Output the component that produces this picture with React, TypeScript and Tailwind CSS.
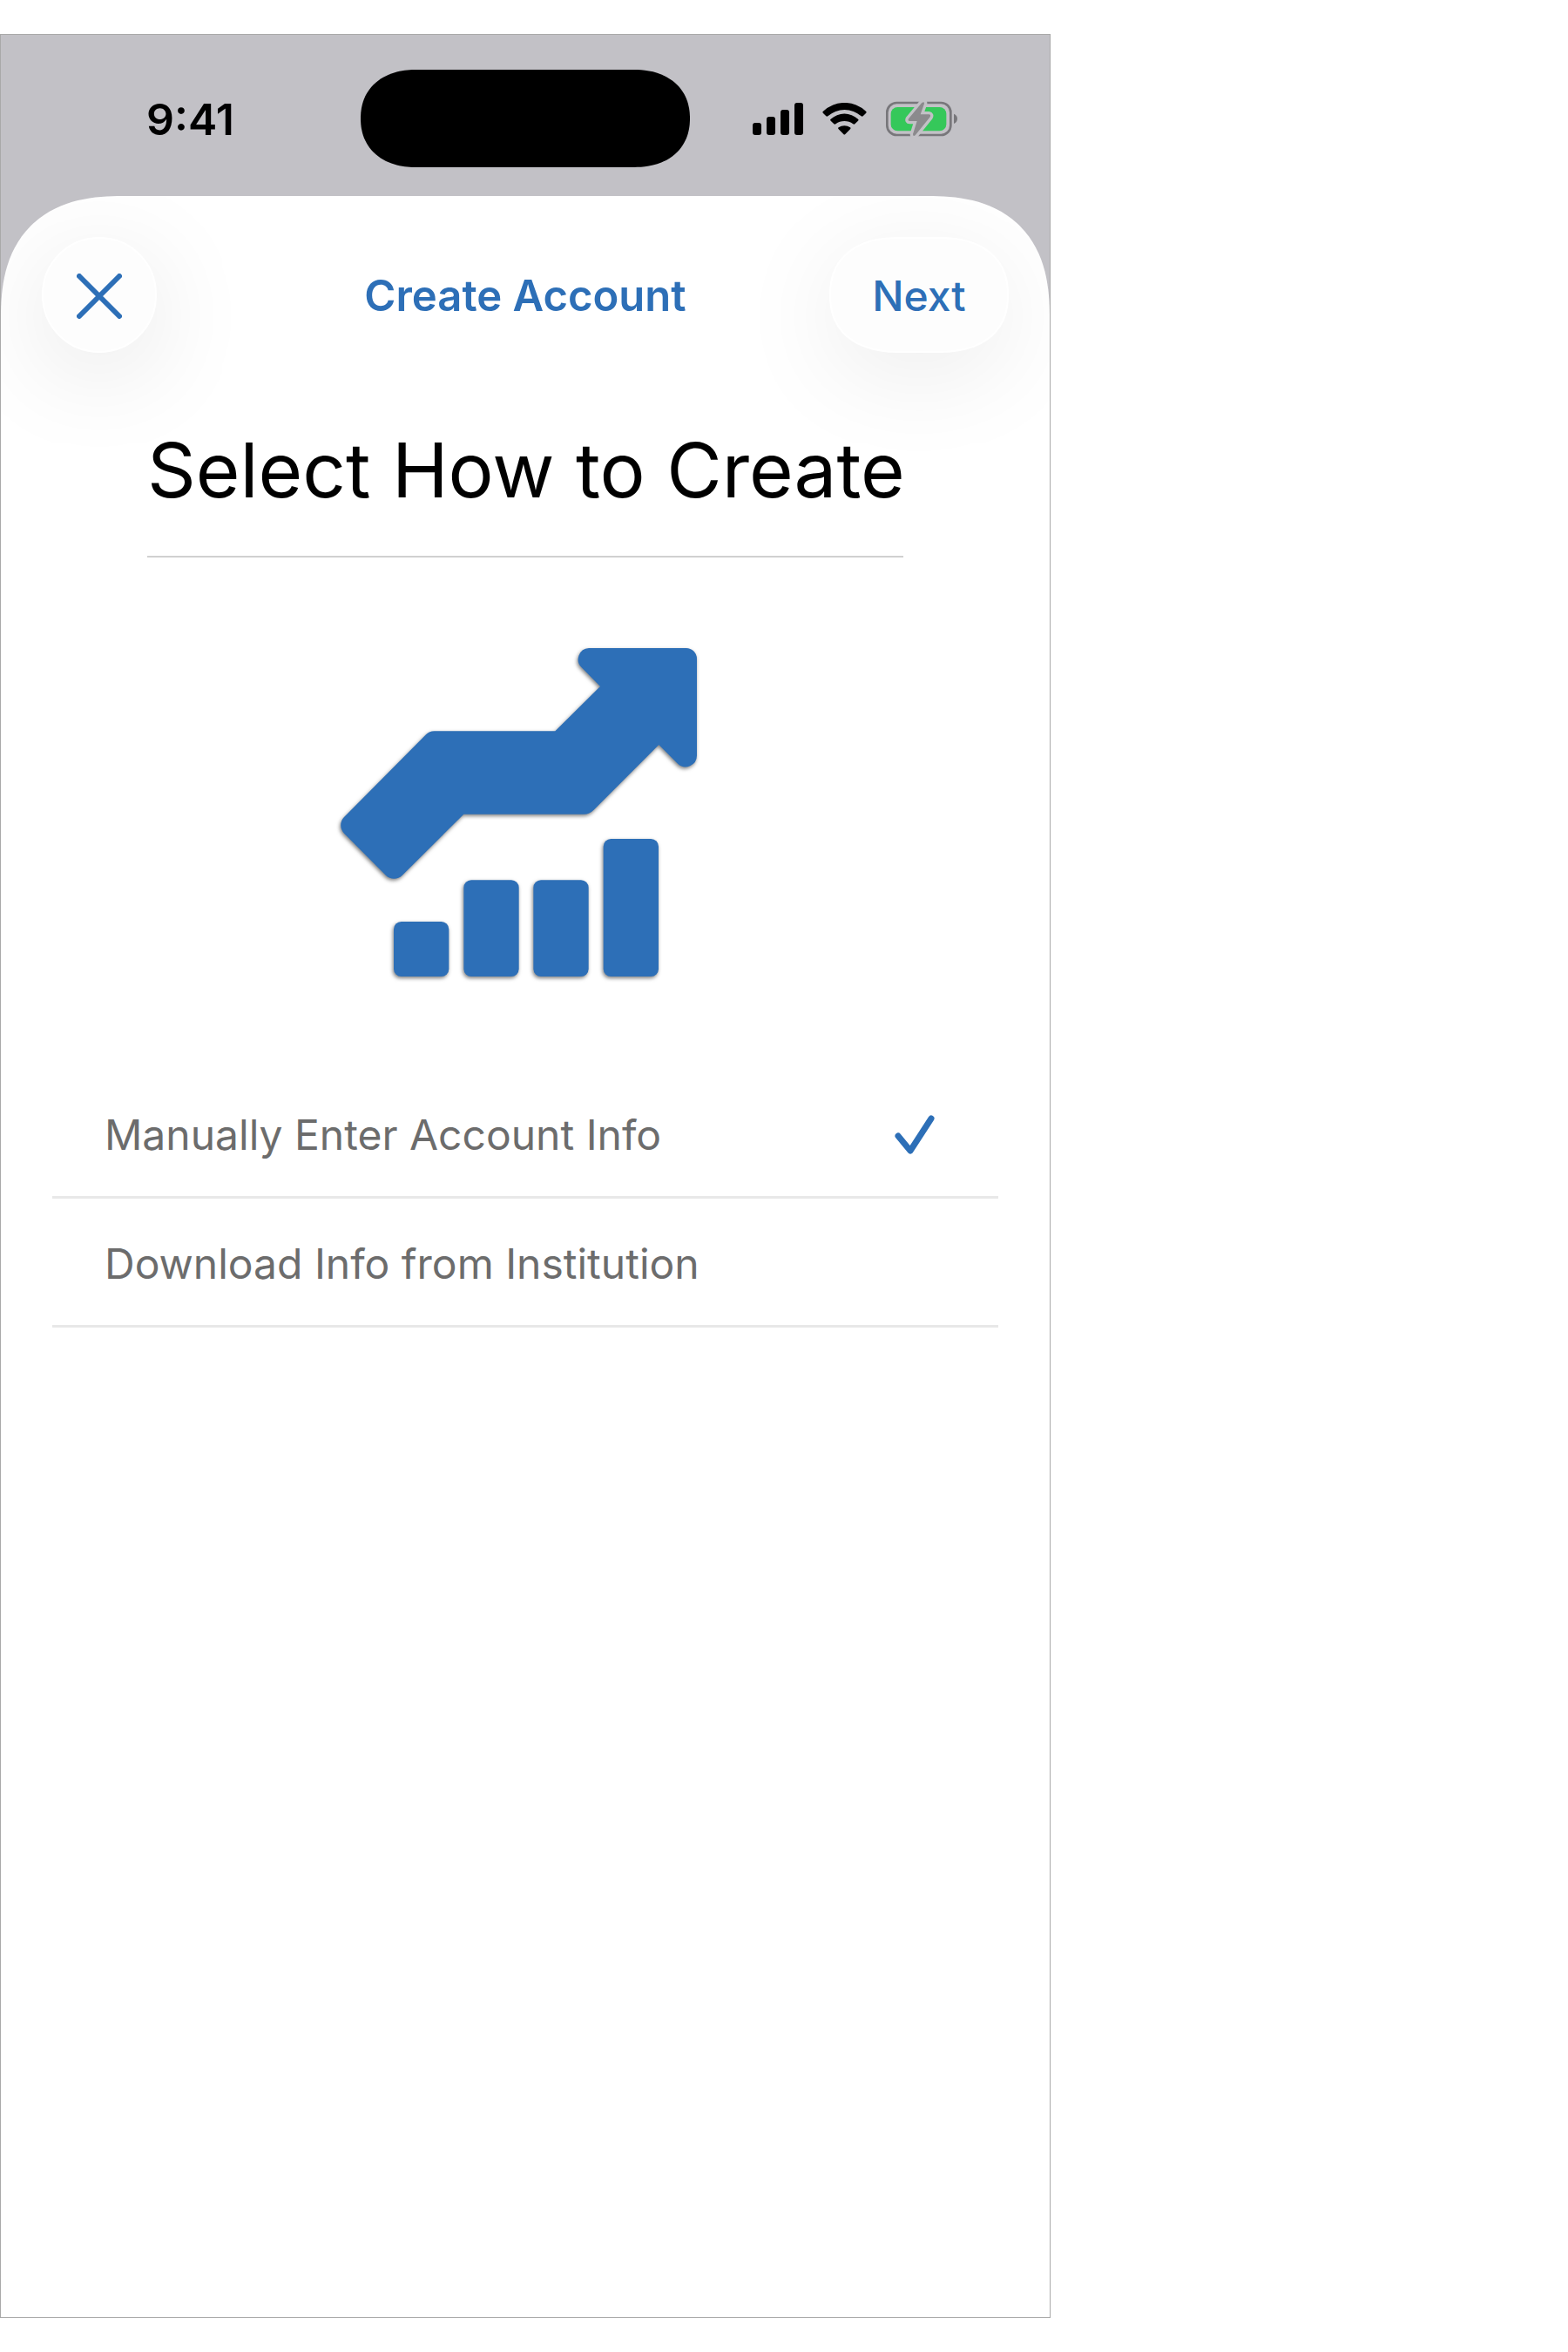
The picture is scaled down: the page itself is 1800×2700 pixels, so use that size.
import { useState } from "react";

const options = [
    { id: "manual", label: "Manually Enter Account Info" },
    { id: "download", label: "Download Info from Institution" },
];

function SignalIcon() {
    return (
        <svg viewBox="75 54 174 111" className="h-[37px] w-[58px]" aria-hidden="true">
            <rect x="75" y="123" width="30" height="42" rx="9" />
            <rect x="123" y="102" width="30" height="63" rx="9" />
            <rect x="171" y="78" width="30" height="87" rx="9" />
            <rect x="219" y="54" width="30" height="111" rx="9" />
        </svg>
    );
}

function WifiIcon() {
    return (
        <svg viewBox="315 54 153 111" className="h-[37px] w-[51px]" aria-hidden="true">
            <path d="M318 83A107 107 0 0 1 465 83Q469 86 465 90L455 100Q452 102 449 100A86 86 0 0 0 334 100Q331 102 328 100L318 90Q314 86 318 83Z" />
            <path d="M344 110A70 70 0 0 1 438 110Q442 113 438 116L427 127Q424 129 421 127A51 51 0 0 0 361 127Q358 129 355 127L344 116Q340 113 344 110Z" />
            <path d="M371 139A34 34 0 0 1 411 139Q415 141 411 145L394 162Q391 165 388 162L371 145Q367 141 371 139Z" />
        </svg>
    );
}

function BatteryIcon() {
    const bolt =
        "M657 55L612 109Q608 117 616 117H641L627 162Q627 171 635 166L686 103Q690 95 682 94H653L666 57Q667 47 657 55Z";
    return (
        <svg viewBox="534 45 246 129" className="h-[43px] w-[82px]" aria-hidden="true">
            <rect x="538" y="54" width="219" height="111" rx="33" fill="none" stroke="#78777b" strokeWidth="8" />
            <rect x="551" y="69" width="191" height="82" rx="23" fill="#35c85a" />
            <path d="M768 92Q780 97 780 109Q780 121 768 126Z" fill="#78777b" />
            <path d={bolt} fill="#c2c1c6" stroke="#c2c1c6" strokeWidth="20" strokeLinejoin="round" />
            <path d={bolt} fill="#8b8a8d" />
        </svg>
    );
}

function GrowthIcon() {
    return (
        <svg
            viewBox="24 0 1350 1260"
            className="h-[420px] w-[450px] drop-shadow-[-1px_2px_2px_rgba(0,0,0,0.5)]"
            fill="#2d6fb7"
            aria-hidden="true"
        >
            <path d="M918 72H1253A37 37 0 0 1 1290 109V442A39 39 0 0 1 1224 470L1159 405L935 629Q920 644 902 644H487L275 855A40 40 0 0 1 219 855L75 710A40 40 0 0 1 75 654L357 370Q369 358 385 358H802L957 204L893 139A39 39 0 0 1 918 72Z" />
            <rect x="246" y="1014" width="190" height="189" rx="26" />
            <rect x="487" y="871" width="190" height="332" rx="26" />
            <rect x="727" y="871" width="190" height="332" rx="26" />
            <rect x="968" y="729" width="190" height="474" rx="26" />
        </svg>
    );
}

export default function App() {
    const [selected, setSelected] = useState("manual");

    return (
        <div className="flex min-h-screen flex-col bg-white py-[39px] font-['Inter',sans-serif]">
            <div className="flex w-full max-w-[1206px] flex-1 flex-col border border-[#a9a9a9] bg-[#c2c1c6]">

                {/* STATUS BAR */}
                <div className="grid grid-cols-[1fr_378px_1fr] items-center pt-10 pb-[33px]">
                    <div className="pt-[2px] pl-[167px] text-[50px] leading-[60px] font-semibold text-black">9:41</div>
                    <div className="h-[112px] rounded-[64px/56px] bg-black [corner-shape:superellipse(1.15)]" />
                    <div className="flex items-center justify-end gap-[22px] pr-[106px]">
                        <SignalIcon />
                        <WifiIcon />
                        <BatteryIcon />
                    </div>
                </div>

                {/* SHEET */}
                <main className="flex-1 overflow-hidden rounded-t-[140px] bg-white [corner-shape:superellipse(1.3)]">
                    <header className="grid grid-cols-[1fr_auto_1fr] items-center px-[47px] pt-[47px] text-[#2d6fb7]">
                        <button
                            type="button"
                            aria-label="Close"
                            className="flex h-[133px] w-[132px] items-center justify-center rounded-full border-2 border-white bg-[#fdfdfd] pt-[2px] shadow-[0_24px_120px_rgba(0,0,0,0.1)]"
                        >
                            <svg viewBox="0 0 52 52" className="size-[52px]" fill="none" stroke="currentColor" strokeWidth="6" strokeLinecap="round" aria-hidden="true">
                                <path d="M3 3L49 49M49 3L3 49" />
                            </svg>
                        </button>
                        <h2 className="pt-[2px] text-[49px] leading-[60px] font-semibold">Create Account</h2>
                        <button
                            type="button"
                            className="h-[133px] w-[206px] justify-self-end rounded-[80px/66px] border-2 border-white bg-[#fdfdfd] pt-[2px] text-[48px] leading-[60px] font-medium shadow-[0_24px_120px_rgba(0,0,0,0.08)] [corner-shape:superellipse(1.2)]"
                        >
                            Next
                        </button>
                    </header>

                    <h1 className="mx-[168px] mt-[75px] border-b-2 border-[#d0d0d0] pb-[38px] text-center text-[87px] leading-[120px] whitespace-nowrap text-black">
                        Select How to Create
                    </h1>

                    <div className="mt-20 flex justify-center">
                        <GrowthIcon />
                    </div>

                    {/* OPTIONS */}
                    <div role="radiogroup" aria-label="Select How to Create" className="mt-[88px] px-[59px]">
                        {options.map((option) => (
                            <label
                                key={option.id}
                                className="relative flex h-[148px] cursor-pointer items-center justify-between border-b-[3px] border-[#e8e8e8] pt-1 pr-[73px] pl-[60px] text-[48px] leading-[60px] text-[#6c6c6c]"
                            >
                                <input
                                    type="radio"
                                    name="method"
                                    className="peer sr-only"
                                    checked={selected === option.id}
                                    onChange={() => setSelected(option.id)}
                                />
                                <span>{option.label}</span>
                                <svg viewBox="0 0 46 45" className="invisible h-[45px] w-[46px] peer-checked:visible" fill="none" stroke="#2d6fb7" strokeWidth="7" strokeLinecap="round" strokeLinejoin="round" aria-hidden="true">
                                    <path d="M4 24L18 41L42 4" />
                                </svg>
                            </label>
                        ))}
                    </div>
                </main>
            </div>
        </div>
    );
}
